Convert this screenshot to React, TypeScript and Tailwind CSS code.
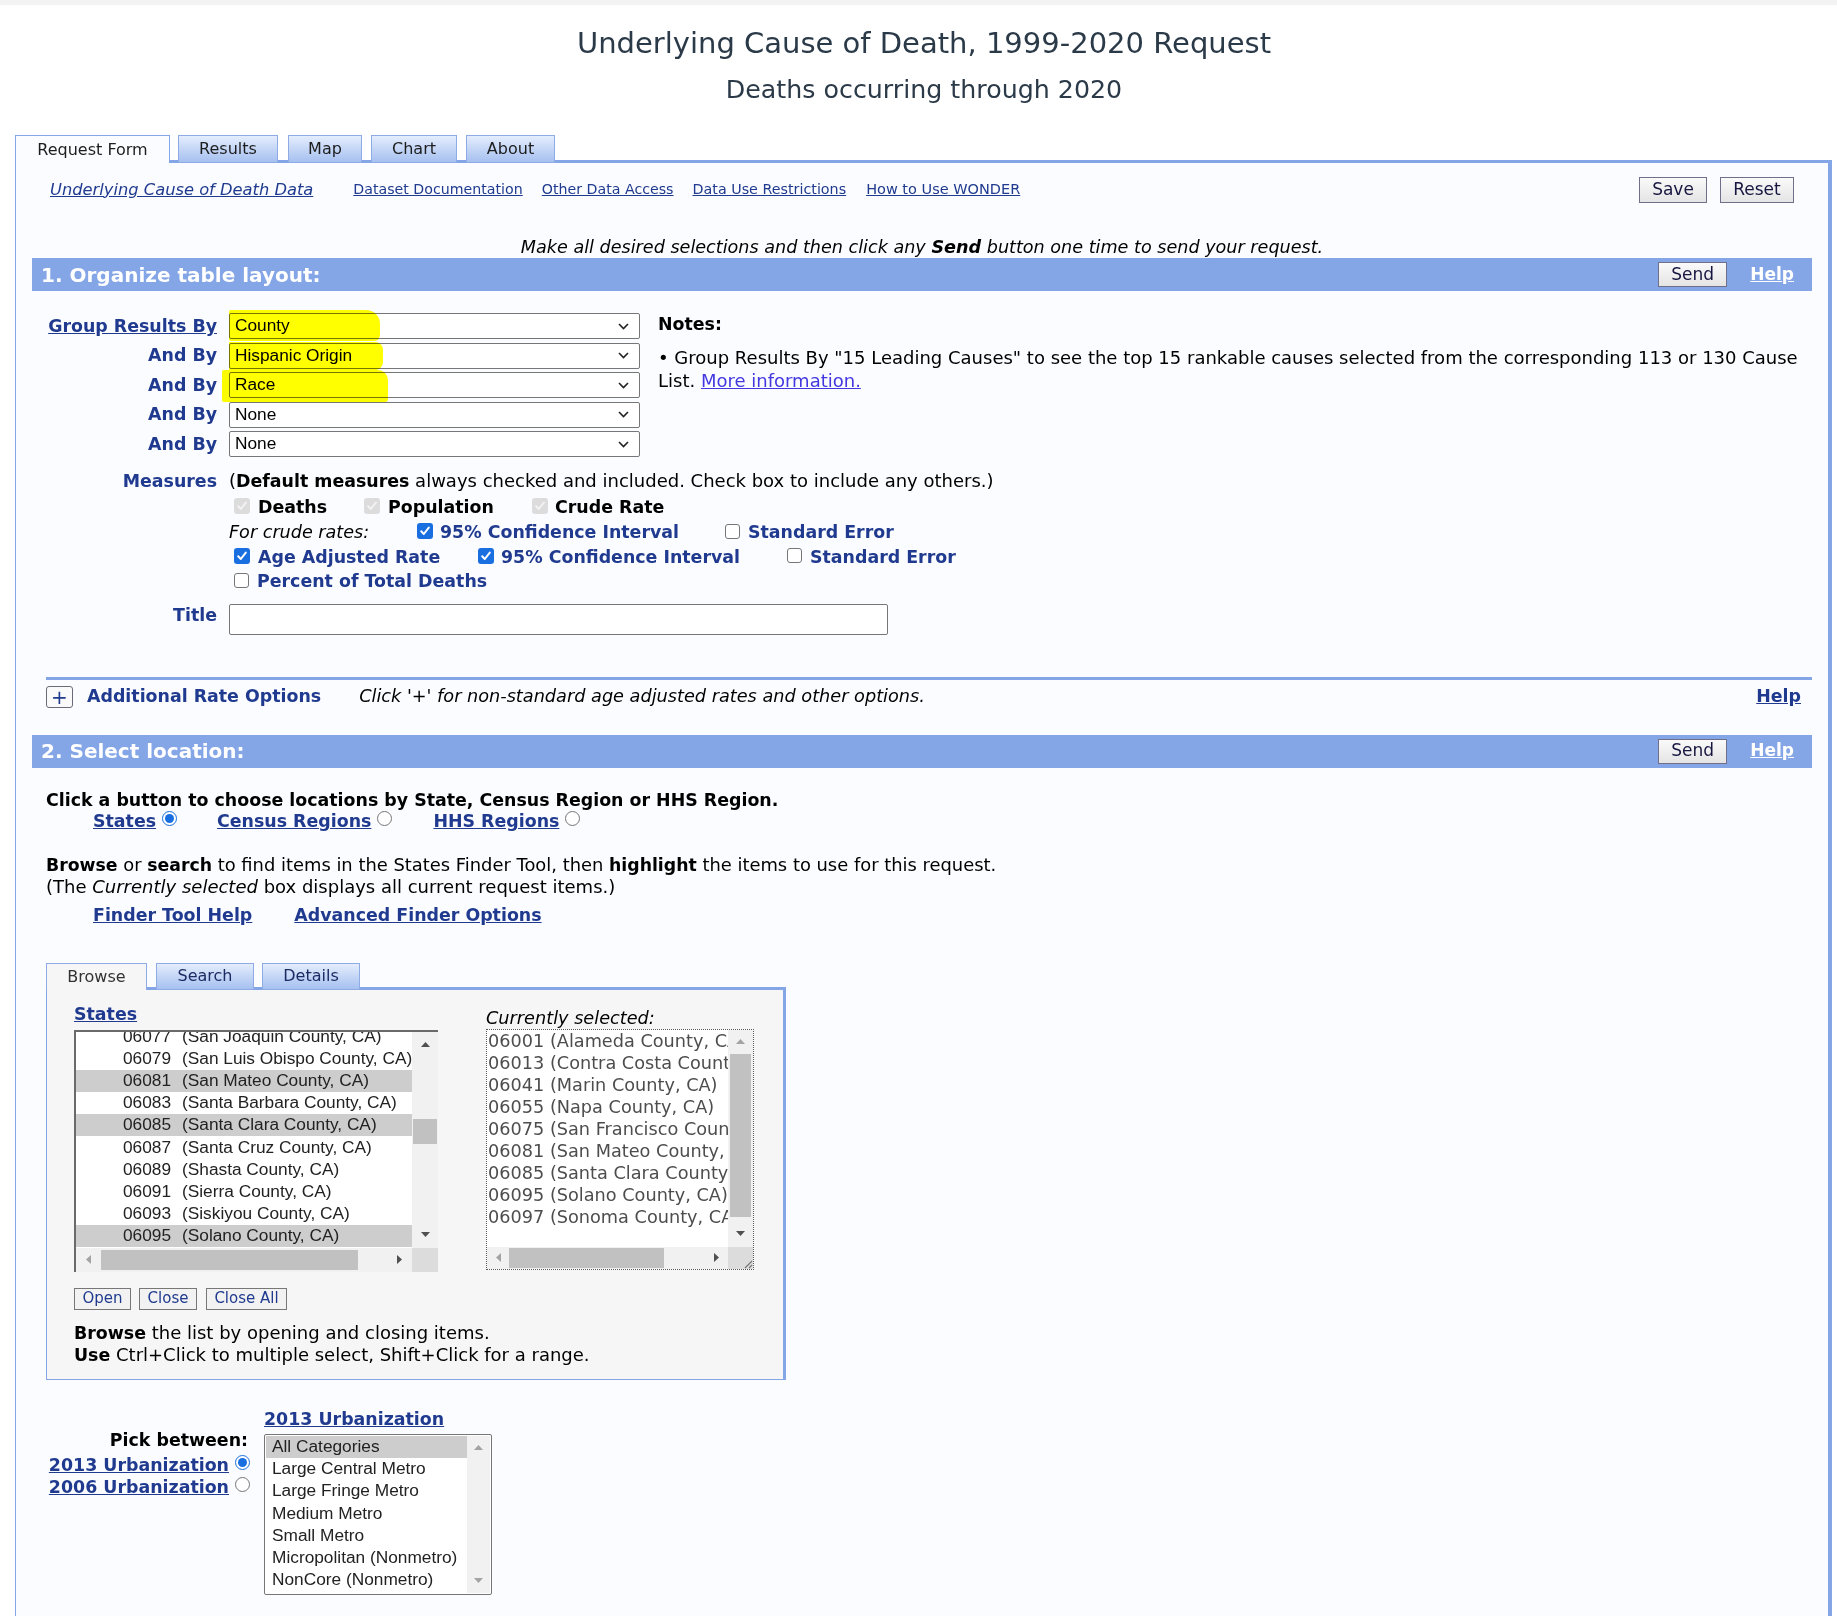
import React from "react";

const V = "font-['DejaVu_Sans',Verdana,sans-serif]";
const A = "font-['Liberation_Sans',Arial,sans-serif]";
const NAVY = "text-[#1f3a8f]";
const B = "font-bold text-[17.4px]";

function Arrow({ dir, light }: { dir: "up" | "down" | "left" | "right"; light?: boolean }) {
  const c = light ? "#a3a3a3" : "#505050";
  if (dir === "up")
    return (
      <svg width="9" height="5" viewBox="0 0 9 5">
        <path d="M0 5 L4.5 0 L9 5Z" fill={c} />
      </svg>
    );
  if (dir === "down")
    return (
      <svg width="9" height="5" viewBox="0 0 9 5">
        <path d="M0 0 L9 0 L4.5 5Z" fill={c} />
      </svg>
    );
  if (dir === "left")
    return (
      <svg width="5" height="9" viewBox="0 0 5 9">
        <path d="M5 0 L5 9 L0 4.5Z" fill={c} />
      </svg>
    );
  return (
    <svg width="5" height="9" viewBox="0 0 5 9">
      <path d="M0 0 L5 4.5 L0 9Z" fill={c} />
    </svg>
  );
}

function Cb({ s }: { s: "on" | "off" | "dis" }) {
  if (s === "off")
    return <span className="inline-block w-[15px] h-[15px] rounded-[3px] border border-[#767676] bg-white shrink-0 mb-[3px]" />;
  const bg = s === "on" ? "bg-[#1a6fe0]" : "bg-[#dcdcdc]";
  const stroke = s === "on" ? "#ffffff" : "#f2f2f2";
  return (
    <span className={`inline-flex w-[16px] h-[16px] rounded-[3px] ${bg} items-center justify-center shrink-0 mb-[3px]`}>
      <svg width="12" height="12" viewBox="0 0 12 12">
        <path d="M2.2 6.3 L4.8 9 L9.8 2.6" stroke={stroke} strokeWidth="2" fill="none" strokeLinecap="round" strokeLinejoin="round" />
      </svg>
    </span>
  );
}

function Radio({ on }: { on?: boolean }) {
  return on ? (
    <span className="inline-flex w-[15px] h-[15px] rounded-full border-[1.5px] border-[#1a6fe0] items-center justify-center bg-white shrink-0 mb-[6px]">
      <span className="w-[9px] h-[9px] rounded-full bg-[#1a6fe0]" />
    </span>
  ) : (
    <span className="inline-block w-[15px] h-[15px] rounded-full border border-[#767676] bg-white shrink-0 mb-[6px]" />
  );
}

function Sel({ v }: { v: string }) {
  return (
    <div className={`h-[26px] w-[411px] border border-[#767676] rounded-[2px] bg-white flex items-center pl-[5px] ${A} text-[17.3px] text-black`}>
      <span>{v}</span>
      <svg className="ml-auto mr-[10px]" width="11" height="7" viewBox="0 0 11 7">
        <path d="M1 1 L5.5 5.5 L10 1" stroke="#222" strokeWidth="1.6" fill="none" />
      </svg>
    </div>
  );
}

function Btn({ children, className = "" }: { children: React.ReactNode; className?: string }) {
  return (
    <div
      className={`flex items-center justify-center border border-[#6f6f8a] bg-linear-to-b from-[#fafafa] to-[#e4e4e4] text-[#161640] ${className}`}
    >
      {children}
    </div>
  );
}

function Bar({ title }: { title: string }) {
  return (
    <div className="h-[33px] bg-[#84a5e6] flex items-center pl-[9px] pr-[18px]">
      <span className="text-white font-bold text-[20px]">{title}</span>
      <Btn className="ml-auto h-[25px] w-[69px] text-[17px]">Send</Btn>
      <span className="ml-[23px] text-white font-bold underline text-[17px]">Help</span>
    </div>
  );
}

const stateRows: [string, string, boolean][] = [
  ["06077", "(San Joaquin County, CA)", false],
  ["06079", "(San Luis Obispo County, CA)", false],
  ["06081", "(San Mateo County, CA)", true],
  ["06083", "(Santa Barbara County, CA)", false],
  ["06085", "(Santa Clara County, CA)", true],
  ["06087", "(Santa Cruz County, CA)", false],
  ["06089", "(Shasta County, CA)", false],
  ["06091", "(Sierra County, CA)", false],
  ["06093", "(Siskiyou County, CA)", false],
  ["06095", "(Solano County, CA)", true],
];

const selRows = [
  "06001 (Alameda County, CA)",
  "06013 (Contra Costa County, CA)",
  "06041 (Marin County, CA)",
  "06055 (Napa County, CA)",
  "06075 (San Francisco County, CA)",
  "06081 (San Mateo County, CA)",
  "06085 (Santa Clara County, CA)",
  "06095 (Solano County, CA)",
  "06097 (Sonoma County, CA)",
];

const urbRows = [
  "All Categories",
  "Large Central Metro",
  "Large Fringe Metro",
  "Medium Metro",
  "Small Metro",
  "Micropolitan (Nonmetro)",
  "NonCore (Nonmetro)",
];

export default function App() {
  return (
    <div className={`${V} bg-white min-h-[1616px] text-black text-[18px] overflow-hidden`}>
      <div className="h-[5px] bg-[#f3f3f3]" />
      <div className="text-center text-[#2b3a48] pl-[11px]">
        <h1 className="pt-[21px] text-[29px] leading-[34px]">Underlying Cause of Death, 1999-2020 Request</h1>
        <h2 className="mt-[15px] text-[25.3px] leading-[30px]">Deaths occurring through 2020</h2>
      </div>

      {/* main tabs */}
      <div className="relative z-10 mt-[30px] ml-[15px] flex items-end h-[28px] -mb-[3px] text-[16px] text-[#1d1d1d]">
        <div className="w-[155px] h-[28px] border-l border-t border-r border-[#84a5e6] bg-[#fbfcff] flex items-center justify-center">
          Request Form
        </div>
        {[
          ["Results", "ml-[8px] w-[100px]"],
          ["Map", "ml-[10px] w-[74px]"],
          ["Chart", "ml-[9px] w-[86px]"],
          ["About", "ml-[9px] w-[89px]"],
        ].map(([t, c]) => (
          <div
            key={t}
            className={`${c} h-[28px] border border-[#8eabe6] bg-linear-to-b from-[#e4edfc] to-[#a6c0f0] flex items-center justify-center`}
          >
            {t}
          </div>
        ))}
      </div>

      {/* main panel */}
      <div className="ml-[15px] mr-[5px] border-l border-t-[3px] border-r-[4px] border-[#84a5e6] bg-[#fbfcff] min-h-[1460px] px-[16px]">
        {/* links row */}
        <div className="mt-[14px] flex items-center h-[26px] pl-[18px] pr-[18px]">
          <span className={`italic underline text-[16.3px] ${NAVY}`}>Underlying Cause of Death Data</span>
          <span className={`ml-[40px] underline text-[14.2px] ${NAVY}`}>Dataset Documentation</span>
          <span className={`ml-[19px] underline text-[14.2px] ${NAVY}`}>Other Data Access</span>
          <span className={`ml-[19px] underline text-[14.3px] ${NAVY}`}>Data Use Restrictions</span>
          <span className={`ml-[20px] underline text-[14.5px] ${NAVY}`}>How to Use WONDER</span>
          <Btn className="ml-auto h-[26px] w-[68px] text-[17px]">Save</Btn>
          <Btn className="ml-[13px] h-[26px] w-[74px] text-[17px]">Reset</Btn>
        </div>

        <p className="mt-[33px] text-center italic leading-[22px] text-[17.6px]">
          Make all desired selections and then click any <b>Send</b> button one time to send your request.
        </p>

        <Bar title="1. Organize table layout:" />

        {/* group by */}
        <div className="mt-[22px] flex">
          <div className={`w-[185px] shrink-0 flex flex-col items-end gap-[3.5px] ${B} ${NAVY}`}>
            <div className="h-[26px] flex items-center underline">Group Results By</div>
            <div className="h-[26px] flex items-center">And By</div>
            <div className="h-[26px] flex items-center">And By</div>
            <div className="h-[26px] flex items-center">And By</div>
            <div className="h-[26px] flex items-center">And By</div>
          </div>
          <div className="relative ml-[12px] w-[411px] shrink-0 flex flex-col gap-[3.5px]">
            <Sel v="County" />
            <Sel v="Hispanic Origin" />
            <Sel v="Race" />
            <Sel v="None" />
            <Sel v="None" />
            <div className="absolute left-0 top-[-3px] w-[151px] h-[31px] bg-[#ffff00] mix-blend-multiply rounded-tr-[14px] rounded-br-[6px] rounded-l-[2px]" />
            <div className="absolute left-0 top-[29px] w-[154px] h-[28px] bg-[#ffff00] mix-blend-multiply rounded-r-[8px]" />
            <div className="absolute left-[-7px] top-[57px] w-[166px] h-[32px] bg-[#ffff00] mix-blend-multiply rounded-tr-[10px] rounded-br-[3px] rounded-l-[2px]" />
          </div>
          <div className="ml-[18px] flex-1">
            <div className={`${B} leading-[22px]`}>Notes:</div>
            <p className="mt-[11px] leading-[23px]">
              • Group Results By "15 Leading Causes" to see the top 15 rankable causes selected from the corresponding 113 or 130 Cause
              <br />
              List. <span className="underline text-[#4338e0]">More information.</span>
            </p>
          </div>
        </div>

        {/* measures */}
        <div className="mt-[12px] flex">
          <div className={`w-[185px] shrink-0 text-right ${B} leading-[24px] ${NAVY}`}>Measures</div>
          <div className="ml-[12px]">
            <div className="leading-[24px]">
              (<b className="text-[17.4px]">Default measures</b> always checked and included. Check box to include any others.)
            </div>
            <div className={`mt-[2px] h-[25px] flex items-center pl-[5px] ${B}`}>
              <div className="w-[130px] flex items-center gap-[8px]">
                <Cb s="dis" />
                Deaths
              </div>
              <div className="w-[168px] flex items-center gap-[8px]">
                <Cb s="dis" />
                Population
              </div>
              <div className="flex items-center gap-[7px]">
                <Cb s="dis" />
                Crude Rate
              </div>
            </div>
            <div className="h-[25px] flex items-center">
              <div className="w-[188px] italic text-[17.6px]">For crude rates:</div>
              <div className={`w-[308px] flex items-center gap-[7px] ${B} ${NAVY}`}>
                <Cb s="on" />
                95% Confidence Interval
              </div>
              <div className={`flex items-center gap-[8px] ${B} ${NAVY}`}>
                <Cb s="off" />
                Standard Error
              </div>
            </div>
            <div className={`h-[24.5px] flex items-center pl-[5px] ${B} ${NAVY}`}>
              <div className="w-[244px] flex items-center gap-[8px]">
                <Cb s="on" />
                Age Adjusted Rate
              </div>
              <div className="w-[309px] flex items-center gap-[7px]">
                <Cb s="on" />
                95% Confidence Interval
              </div>
              <div className="flex items-center gap-[8px]">
                <Cb s="off" />
                Standard Error
              </div>
            </div>
            <div className={`h-[24px] flex items-center pl-[5px] ${B} ${NAVY}`}>
              <div className="flex items-center gap-[8px]">
                <Cb s="off" />
                Percent of Total Deaths
              </div>
            </div>
          </div>
        </div>

        {/* title */}
        <div className="mt-[10px] flex items-start">
          <div className={`w-[185px] shrink-0 text-right ${B} leading-[22px] ${NAVY}`}>Title</div>
          <div className="ml-[12px] w-[659px] h-[31px] border border-[#767676] rounded-[2px] bg-white" />
        </div>

        {/* additional rate options */}
        <div className="mt-[42px] ml-[14px] h-[3px] bg-[#84a5e6]" />
        <div className="mt-[6px] ml-[14px] mr-[11px] h-[22px] flex items-center">
          <div className={`w-[27px] h-[22px] border border-[#6a6a7a] rounded-[3px] bg-[#fafafa] flex items-center justify-center text-[20px] leading-none ${NAVY}`}>
            +
          </div>
          <span className={`ml-[14px] ${B} ${NAVY}`}>Additional Rate Options</span>
          <span className="ml-[38px] italic text-[17.7px]">Click '+' for non-standard age adjusted rates and other options.</span>
          <span className={`ml-auto ${B} underline ${NAVY}`}>Help</span>
        </div>

        <div className="mt-[27px]">
          <Bar title="2. Select location:" />
        </div>

        {/* location */}
        <div className="pl-[14px]">
          <div className={`mt-[21px] ${B} leading-[22px]`}>
            Click a button to choose locations by State, Census Region or HHS Region.
          </div>
          <div className={`pl-[47px] h-[22px] flex items-center ${B} ${NAVY}`}>
            <span className="underline">States</span>
            <span className="ml-[6px] flex">
              <Radio on />
            </span>
            <span className="ml-[40px] underline">Census Regions</span>
            <span className="ml-[6px] flex">
              <Radio />
            </span>
            <span className="ml-[41px] underline">HHS Regions</span>
            <span className="ml-[6px] flex">
              <Radio />
            </span>
          </div>
          <div className="mt-[21px] leading-[22px] text-[17.9px]">
            <b className="text-[17.3px]">Browse</b> or <b className="text-[17.3px]">search</b> to find items in the States Finder Tool, then{" "}
            <b className="text-[17.3px]">highlight</b> the items to use for this request.
          </div>
          <div className="leading-[22px]">
            (The <i>Currently selected</i> box displays all current request items.)
          </div>
          <div className={`mt-[6px] pl-[47px] leading-[22px] ${B} underline ${NAVY}`}>
            <span>Finder Tool Help</span>
            <span className="ml-[42px]">Advanced Finder Options</span>
          </div>

          {/* finder tabs */}
          <div className="relative z-10 mt-[37px] flex items-end h-[27px] -mb-[3px] text-[16px]">
            <div className="w-[101px] h-[27px] border-l border-t border-r border-[#8eabe6] bg-[#f6f6f6] flex items-center justify-center text-[#333]">
              Browse
            </div>
            <div className="ml-[9px] w-[98px] h-[27px] border border-[#8eabe6] bg-linear-to-b from-[#e4edfc] to-[#a6c0f0] flex items-center justify-center text-[#1c2b63]">
              Search
            </div>
            <div className="ml-[8px] w-[98px] h-[27px] border border-[#8eabe6] bg-linear-to-b from-[#e4edfc] to-[#a6c0f0] flex items-center justify-center text-[#1c2b63]">
              Details
            </div>
          </div>
          <div className="w-[740px] border-l border-t-[3px] border-r-[3px] border-b border-[#84a5e6] bg-[#f6f6f6] pl-[27px] pt-[13px] pb-[13px]">
            <div className="flex">
              {/* states list */}
              <div>
                <div className={`leading-[22px] ${B} underline ${NAVY}`}>States</div>
                <div className="mt-[5px] w-[364px] h-[242px] border-t-2 border-l-2 border-[#6a6a6a] bg-white flex flex-col">
                  <div className="flex flex-1 min-h-0">
                    <div className={`flex-1 overflow-hidden ${A} text-[17.3px] text-[#222]`}>
                      <div className="-mt-[6px]">
                        {stateRows.map(([c, n, s]) => (
                          <div key={c} className={`h-[22.2px] flex items-center pl-[47px] whitespace-nowrap ${s ? "bg-[#cdcdcd]" : ""}`}>
                            <span className="w-[59px] shrink-0">{c}</span>
                            <span>{n}</span>
                          </div>
                        ))}
                      </div>
                    </div>
                    <div className="w-[26px] bg-[#f1f1f1] flex flex-col items-center">
                      <div className="h-[26px] flex items-center justify-center">
                        <Arrow dir="up" />
                      </div>
                      <div className="mt-[61px] w-[24px] h-[25px] bg-[#c1c1c1]" />
                      <div className="mt-auto h-[26px] flex items-center justify-center">
                        <Arrow dir="down" />
                      </div>
                    </div>
                  </div>
                  <div className="h-[24px] flex">
                    <div className="flex-1 bg-[#f1f1f1] flex items-center">
                      <div className="w-[25px] flex justify-center">
                        <Arrow dir="left" light />
                      </div>
                      <div className="w-[257px] h-[20px] bg-[#c1c1c1]" />
                      <div className="ml-auto w-[25px] flex justify-center">
                        <Arrow dir="right" />
                      </div>
                    </div>
                    <div className="w-[26px] bg-[#dcdcdc]" />
                  </div>
                </div>
              </div>

              {/* currently selected */}
              <div className="ml-[48px]">
                <div className="mt-[4px] leading-[22px] italic text-[17.7px]">Currently selected:</div>
                <div className="w-[268px] h-[241px] border border-dotted border-[#555] bg-white flex flex-col">
                  <div className="flex flex-1 min-h-0">
                    <div className="flex-1 overflow-hidden text-[#4d4d4d] text-[17.7px]">
                      {selRows.map((r) => (
                        <div key={r} className="h-[22.1px] leading-[22.1px] whitespace-nowrap pl-[1px]">
                          {r}
                        </div>
                      ))}
                    </div>
                    <div className="w-[25px] bg-[#f1f1f1] flex flex-col items-center">
                      <div className="h-[24px] flex items-center justify-center">
                        <Arrow dir="up" light />
                      </div>
                      <div className="w-[21px] h-[163px] bg-[#c1c1c1]" />
                      <div className="mt-auto h-[26px] flex items-center justify-center">
                        <Arrow dir="down" />
                      </div>
                    </div>
                  </div>
                  <div className="h-[22px] flex">
                    <div className="flex-1 bg-[#f1f1f1] flex items-center">
                      <div className="w-[22px] flex justify-center">
                        <Arrow dir="left" light />
                      </div>
                      <div className="w-[155px] h-[20px] bg-[#c1c1c1]" />
                      <div className="ml-auto w-[24px] flex justify-center">
                        <Arrow dir="right" />
                      </div>
                    </div>
                    <div className="w-[25px] bg-[#dcdcdc] flex items-end justify-end">
                      <svg width="12" height="12" viewBox="0 0 12 12">
                        <path d="M11 4 L4 11 M11 8 L8 11" stroke="#777" strokeWidth="1.2" />
                      </svg>
                    </div>
                  </div>
                </div>
              </div>
            </div>

            <div className={`mt-[16px] flex text-[15px] ${NAVY}`}>
              <div className="w-[57px] h-[22px] border border-[#777] bg-[#f2f2f2] flex items-center justify-center">Open</div>
              <div className="ml-[8px] w-[58px] h-[22px] border border-[#777] bg-[#f2f2f2] flex items-center justify-center">Close</div>
              <div className="ml-[9px] w-[81px] h-[22px] border border-[#777] bg-[#f2f2f2] flex items-center justify-center">Close All</div>
            </div>
            <div className="mt-[12px] leading-[22px]">
              <b className="text-[17.4px]">Browse</b> the list by opening and closing items.
            </div>
            <div className="leading-[22px]">
              <b className="text-[17.4px]">Use</b> Ctrl+Click to multiple select, Shift+Click for a range.
            </div>
          </div>

          {/* urbanization */}
          <div className="mt-[28px] flex">
            <div className="w-[204px] shrink-0 pt-[21px] flex flex-col items-end">
              <div className={`leading-[22px] ${B} pr-[2px]`}>Pick between:</div>
              <div className={`mt-[4px] h-[22px] flex items-center ${B} ${NAVY}`}>
                <span className="underline">2013 Urbanization</span>
                <span className="ml-[6px] flex">
                  <Radio on />
                </span>
              </div>
              <div className={`h-[21px] flex items-center ${B} ${NAVY}`}>
                <span className="underline">2006 Urbanization</span>
                <span className="ml-[6px] flex">
                  <Radio />
                </span>
              </div>
            </div>
            <div className="ml-[14px]">
              <div className={`leading-[22px] ${B} underline ${NAVY}`}>2013 Urbanization</div>
              <div className="mt-[4px] w-[228px] h-[161px] border border-[#767676] rounded-[2px] bg-white flex p-[1px]">
                <div className={`flex-1 ${A} text-[17.3px] text-[#222]`}>
                  {urbRows.map((r, i) => (
                    <div key={r} className={`h-[22.3px] flex items-center pl-[6px] whitespace-nowrap ${i === 0 ? "bg-[#cdcdcd]" : ""}`}>
                      {r}
                    </div>
                  ))}
                </div>
                <div className="w-[23px] bg-[#f1f1f1] flex flex-col items-center">
                  <div className="h-[24px] flex items-center justify-center">
                    <Arrow dir="up" light />
                  </div>
                  <div className="mt-auto h-[24px] flex items-center justify-center">
                    <Arrow dir="down" light />
                  </div>
                </div>
              </div>
            </div>
          </div>
        </div>
      </div>
    </div>
  );
}
